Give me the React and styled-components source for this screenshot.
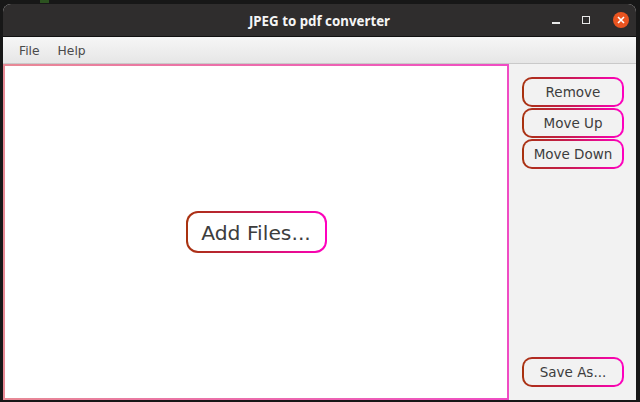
import React from "react";
import styled, { createGlobalStyle } from "styled-components";

const GlobalStyle = createGlobalStyle`
  html, body {
    margin: 0;
    height: 100%;
    background: #171717;
    overflow: hidden;
  }
  #root {
    height: 100%;
  }
`;

const Desktop = styled.div`
  box-sizing: border-box;
  position: relative;
  width: 640px;
  height: 402px;
  padding: 4px 4px 2px 3px;
`;

// bit of the desktop showing above the window
const DesktopSpeck = styled.div`
  position: absolute;
  top: 0;
  left: 40px;
  width: 9px;
  height: 3px;
  background: #2c5220;
`;

const Window = styled.div`
  height: 100%;
  display: flex;
  flex-direction: column;
  border-radius: 8px 8px 0 0;
  overflow: hidden;
  background: #f2f2f2;
  font-family: "DejaVu Sans", sans-serif;
`;

const TitleBar = styled.div`
  flex: none;
  box-sizing: border-box;
  height: 33px;
  padding-top: 1px;
  position: relative;
  display: flex;
  align-items: center;
  justify-content: center;
  background: #2f2d2d;
  border-bottom: 1px solid #111;
  color: #f5f5f5;
  font-family: "Noto Sans", sans-serif;
  font-size: 13.3px;
  font-weight: 700;
`;

const WindowControls = styled.div`
  position: absolute;
  top: 0;
  right: 7px;
  height: 100%;
  display: flex;
  align-items: center;
  gap: 19px;
`;

const MinimizeIcon = styled.span`
  width: 8px;
  height: 2px;
  margin-top: 5px;
  background: #e8e8e8;
`;

const MaximizeIcon = styled.span`
  box-sizing: border-box;
  width: 8px;
  height: 8px;
  margin: 0 4px 0 3px;
  border: 1.5px solid #e8e8e8;
`;

const CloseButton = styled.span`
  width: 16px;
  height: 16px;
  border-radius: 50%;
  display: flex;
  align-items: center;
  justify-content: center;
  background: #e95420;
`;

const MenuBar = styled.div`
  flex: none;
  box-sizing: border-box;
  height: 27px;
  padding: 2px 16px 0;
  display: flex;
  align-items: center;
  gap: 18px;
  background: linear-gradient(#f6f6f6, #e6e6e6);
  border-bottom: 1px solid #c9c9c9;
  color: #4a4a4a;
  font-size: 12.3px;
`;

const Content = styled.div`
  flex: 1;
  min-height: 0;
  display: flex;
`;

const FileArea = styled.div`
  box-sizing: border-box;
  width: 506px;
  display: flex;
  align-items: center;
  justify-content: center;
  border: 2px solid transparent;
  background:
    linear-gradient(#fff, #fff) padding-box,
    linear-gradient(to right, #e88a95, #f04cc4) border-box;
`;

const Sidebar = styled.div`
  flex: 1;
  display: flex;
  flex-direction: column;
  align-items: flex-start;
  gap: 1px;
  padding: 13px 0 13px 13px;
`;

const Spacer = styled.div`
  flex: 1;
`;

const GradientButton = styled.button`
  box-sizing: border-box;
  width: ${(props) => (props.$large ? "141px" : "102px")};
  height: ${(props) => (props.$large ? "42px" : "30px")};
  padding: ${(props) => (props.$large ? "1px 0 0" : "0")};
  border: 2px solid transparent;
  border-radius: ${(props) => (props.$large ? "12px" : "10px")};
  background:
    linear-gradient(${(props) => (props.$large ? "#fff, #fff" : "#f2f2f2, #f2f2f2")}) padding-box,
    linear-gradient(to right, #a8330f, #c81a50 45%, #ff00c0) border-box;
  color: #3d3d3d;
  font-family: "DejaVu Sans", sans-serif;
  font-size: ${(props) => (props.$large ? "20.3px" : "13.5px")};
`;

export default function App() {
  return (
    <>
      <GlobalStyle />
      <Desktop>
        <DesktopSpeck />
        <Window>
          <TitleBar>
            JPEG to pdf converter
            <WindowControls>
              <MinimizeIcon />
              <MaximizeIcon />
              <CloseButton>
                <svg width="8" height="8" viewBox="0 0 8 8">
                  <path d="M1 1l6 6M7 1l-6 6" stroke="#fff" strokeWidth="1.6" />
                </svg>
              </CloseButton>
            </WindowControls>
          </TitleBar>
          <MenuBar>
            <span>File</span>
            <span>Help</span>
          </MenuBar>
          <Content>
            <FileArea>
              <GradientButton $large>Add Files...</GradientButton>
            </FileArea>
            <Sidebar>
              <GradientButton>Remove</GradientButton>
              <GradientButton>Move Up</GradientButton>
              <GradientButton>Move Down</GradientButton>
              <Spacer />
              <GradientButton>Save As...</GradientButton>
            </Sidebar>
          </Content>
        </Window>
      </Desktop>
    </>
  );
}
